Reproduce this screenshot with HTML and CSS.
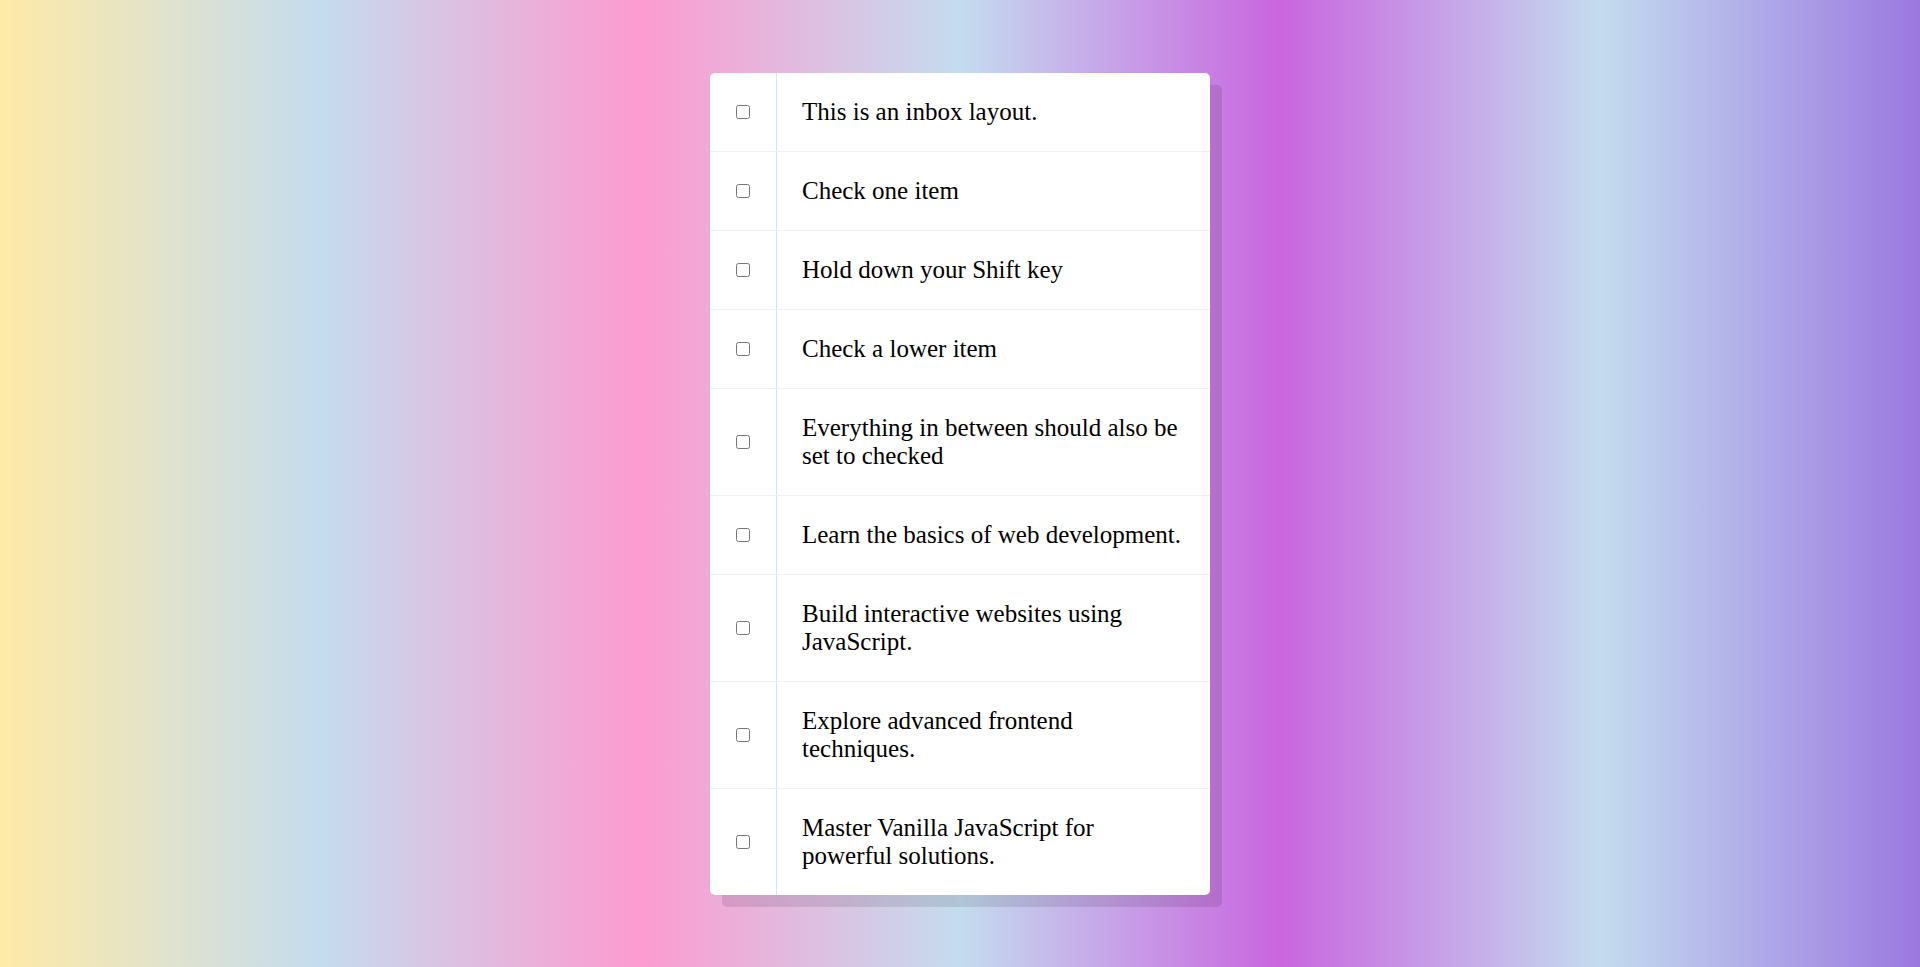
FILE: index.html
```html
<!DOCTYPE html>
<html lang="en">
<head>
<meta charset="UTF-8">
<title>Inbox</title>
<link rel="stylesheet" href="styles.css">
</head>
<body>
<div class="inbox">
  <div class="item"><input type="checkbox"><p>This is an inbox layout.</p></div>
  <div class="item"><input type="checkbox"><p>Check one item</p></div>
  <div class="item"><input type="checkbox"><p>Hold down your Shift key</p></div>
  <div class="item"><input type="checkbox"><p>Check a lower item</p></div>
  <div class="item"><input type="checkbox"><p>Everything in between should also be set to checked</p></div>
  <div class="item"><input type="checkbox"><p>Learn the basics of web development.</p></div>
  <div class="item"><input type="checkbox"><p>Build interactive websites using JavaScript.</p></div>
  <div class="item"><input type="checkbox"><p>Explore advanced frontend techniques.</p></div>
  <div class="item"><input type="checkbox"><p>Master Vanilla JavaScript for powerful solutions.</p></div>
</div>
</body>
</html>
```
FILE: styles.css
```css
html {
  min-height: 100%;
  background: linear-gradient(to right, #ffeaa7 0%, #c4dcef 16.67%, #fd9bd0 33.33%, #c4dcef 50%, #c965df 66.67%, #c4dcef 83.33%, #9b78e0 100%);
}
body {
  margin: 0;
  padding: 73px 0 20px;
  font-family: "Liberation Serif", "Times New Roman", serif;
}
.inbox {
  width: 500px;
  margin: 0 auto;
  background: #fff;
  border-radius: 5px;
  box-shadow: 12px 12px 0 rgba(0, 0, 0, 0.1);
}
.item {
  display: flex;
  align-items: center;
  border-bottom: 1px solid #f1f1f1;
}
.item:last-child {
  border-bottom: 0;
}
.item input[type="checkbox"] {
  margin: 0 26px 0 26px;
  width: 14px;
  height: 14px;
}
.item p {
  flex: 1;
  margin: 0;
  padding: 25px;
  font-size: 25px;
  line-height: 28px;
  color: #000;
  border-left: 1px solid #d1e2ff;
}
```
